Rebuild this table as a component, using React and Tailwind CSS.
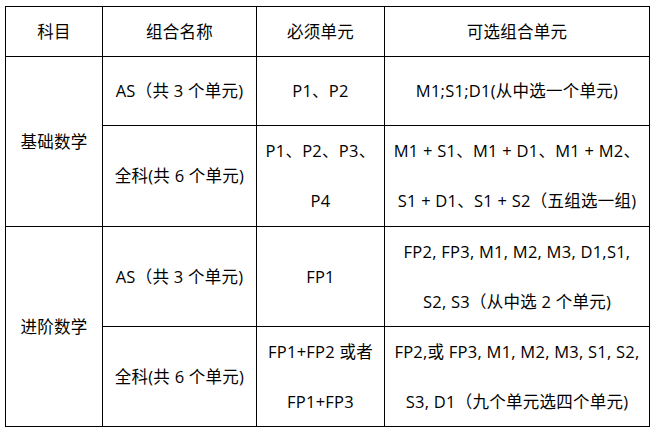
export default function App() {
  const cell = "bg-white flex flex-col items-center justify-center text-center leading-[50px] whitespace-nowrap";
  return (
    <div className="w-[655px] h-[435px] bg-white pt-[6px] pl-[5px]">
      <div
        className="grid w-fit grid-cols-[96px_153px_127px_264px] grid-rows-[49px_68px_100px_99px_99px] gap-px bg-black p-px text-[16.5px] tracking-[0.25px] text-black"
        style={{ fontFamily: '"Open Sans", "Noto Sans CJK SC", sans-serif' }}
      >
        {/* header */}
        <div className={cell}>科目</div>
        <div className={cell}>组合名称</div>
        <div className={cell}>必须单元</div>
        <div className={cell}>可选组合单元</div>

        {/* 基础数学 */}
        <div className={`${cell} row-span-2`}>基础数学</div>
        <div className={cell}>AS（共 3 个单元)</div>
        <div className={cell}>P1、P2</div>
        <div className={cell}>M1;S1;D1(从中选一个单元)</div>

        <div className={cell}>全科(共 6 个单元)</div>
        <div className={cell}>
          <span>P1、P2、P3、</span>
          <span>P4</span>
        </div>
        <div className={cell}>
          <span>M1 + S1、M1 + D1、M1 + M2、</span>
          <span>S1 + D1、S1 + S2（五组选一组)</span>
        </div>

        {/* 进阶数学 */}
        <div className={`${cell} row-span-2`}>进阶数学</div>
        <div className={cell}>AS（共 3 个单元)</div>
        <div className={cell}>FP1</div>
        <div className={cell}>
          <span>FP2, FP3, M1, M2, M3, D1,S1,</span>
          <span>S2, S3（从中选 2 个单元)</span>
        </div>

        <div className={cell}>全科(共 6 个单元)</div>
        <div className={cell}>
          <span>FP1+FP2 或者</span>
          <span>FP1+FP3</span>
        </div>
        <div className={cell}>
          <span>FP2,或 FP3, M1, M2, M3, S1, S2,</span>
          <span>S3, D1（九个单元选四个单元)</span>
        </div>
      </div>
    </div>
  );
}
